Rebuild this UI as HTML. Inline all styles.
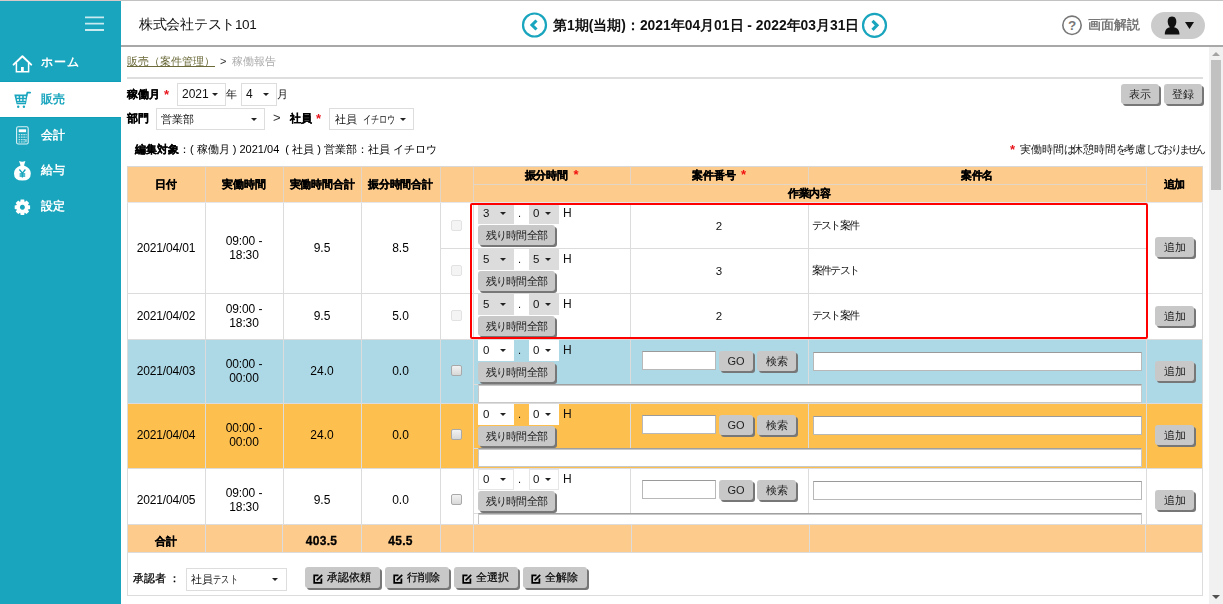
<!DOCTYPE html><html><head><meta charset="utf-8"><style>
html,body{margin:0;padding:0;width:1223px;height:604px;overflow:hidden;background:#fff;}
body{position:relative;font-family:"Liberation Sans",sans-serif;font-size:12px;color:#111;}
body div{position:absolute;box-sizing:border-box;}
.t{white-space:nowrap;will-change:transform;}
.btn{will-change:transform;background:#c8c8c8;border-radius:3px;box-shadow:2px 2px 0 #777;text-align:center;color:#222;white-space:nowrap;}
</style></head><body>
<div style="left:0px;top:0px;width:121px;height:1px;background:#d8c9c9;"></div>
<div style="left:121px;top:0px;width:1102px;height:1px;background:#c2c2c2;"></div>
<div style="left:0px;top:1px;width:121px;height:603px;background:#19a5bd;"></div>
<svg style="position:absolute;left:80px;top:10px" width="30" height="26" viewBox="80 10 30 26"><path d="M85 17.4 H104 M85 23.7 H104 M85 30 H104" stroke="#c8eaf0" stroke-width="1.8"/></svg>
<div class="t" style="left:41px;top:53px;height:18px;line-height:18px;font-size:12px;font-weight:bold;color:#fff;letter-spacing:1px;">ホーム</div>
<div style="left:0px;top:81px;width:121px;height:1px;background:#109fb8;"></div>
<div style="left:0px;top:117px;width:121px;height:1px;background:#109fb8;"></div>
<div style="left:0px;top:82px;width:121px;height:35px;background:#fff;"></div>
<div class="t" style="left:41px;top:90px;height:18px;line-height:18px;font-size:12px;font-weight:bold;color:#19a5bd;">販売</div>
<div class="t" style="left:41px;top:126px;height:18px;line-height:18px;font-size:12px;font-weight:bold;color:#fff;">会計</div>
<div class="t" style="left:41px;top:161px;height:18px;line-height:18px;font-size:12px;font-weight:bold;color:#fff;">給与</div>
<div class="t" style="left:41px;top:197px;height:18px;line-height:18px;font-size:12px;font-weight:bold;color:#fff;">設定</div>
<svg style="position:absolute;left:0;top:0" width="121" height="230" viewBox="0 0 121 230">
<path d="M13.6 64.6 L22.4 56.2 L31.2 64.6" fill="none" stroke="#fff" stroke-width="2" stroke-linecap="round" stroke-linejoin="round"/>
<path d="M16.4 63 V71.7 H28.6 V63" fill="none" stroke="#fff" stroke-width="1.5"/>
<rect x="21" y="67" width="2.8" height="5" fill="#fff"/>
<g fill="#19a5bd">
<path d="M14.3 94.6 H27.6 L25.9 104.2 H16.6 Z"/><path d="M26.4 96 L27.4 92.6 H30.2" fill="none" stroke="#19a5bd" stroke-width="1.7" stroke-linecap="round"/>
<circle cx="18.2" cy="106.8" r="1.2"/><circle cx="23.9" cy="106.8" r="1.2"/>
</g>
<g fill="#fff">
<rect x="16.6" y="96.2" width="2" height="1.6"/><rect x="20.2" y="96.2" width="2" height="1.6"/><rect x="23.8" y="96.2" width="2" height="1.6"/>
<rect x="17.0" y="99.2" width="2" height="1.6"/><rect x="20.2" y="99.2" width="2" height="1.6"/><rect x="23.6" y="99.2" width="2" height="1.6"/>
<rect x="17.4" y="102" width="7.8" height="0.9" opacity="0.6"/>
</g>
<rect x="16.6" y="126.8" width="11.6" height="17.2" rx="1.6" fill="none" stroke="#fff" stroke-opacity="0.85" stroke-width="1.1"/>
<rect x="18.7" y="129.3" width="7.4" height="2.9" fill="#fff"/>
<g fill="#fff" opacity="0.7">
<rect x="18.6" y="134" width="1.6" height="1.3"/><rect x="21" y="134" width="1.6" height="1.3"/><rect x="23.3" y="134" width="1.6" height="1.3"/><rect x="25.5" y="134" width="1.1" height="1.3"/>
<rect x="18.6" y="136.5" width="1.6" height="1.3"/><rect x="21" y="136.5" width="1.6" height="1.3"/><rect x="23.3" y="136.5" width="1.6" height="1.3"/><rect x="25.5" y="136.5" width="1.1" height="1.3"/>
<rect x="18.6" y="139" width="1.6" height="1.3"/><rect x="21" y="139" width="1.6" height="1.3"/><rect x="23.3" y="139" width="1.6" height="1.3"/><rect x="25.3" y="139" width="1.3" height="3.2"/>
<rect x="18.6" y="141.4" width="1.6" height="1.1"/><rect x="21" y="141.4" width="1.6" height="1.1"/><rect x="23.3" y="141.4" width="1.6" height="1.1"/>
</g>
<path d="M19 161 Q22.2 162.5 25.4 161 L24 165.4 Q30.8 167.8 30.8 173.5 Q30.8 180.6 22.4 180.6 Q14 180.6 14 173.5 Q14 167.8 20.6 165.4 Z" fill="#fff"/>
<path d="M19.4 169.5 L22.4 173.2 L25.4 169.5 M22.4 173 V177.5 M19.6 174 H25.2 M19.6 176 H25.2" fill="none" stroke="#19a5bd" stroke-width="1.3"/>
<path d="M27.88 205.11 L30.10 205.51 L30.10 209.09 L27.88 209.49 L27.82 209.63 L29.10 211.48 L26.58 214.00 L24.73 212.72 L24.59 212.78 L24.19 215.00 L20.61 215.00 L20.21 212.78 L20.07 212.72 L18.22 214.00 L15.70 211.48 L16.98 209.63 L16.92 209.49 L14.70 209.09 L14.70 205.51 L16.92 205.11 L16.98 204.97 L15.70 203.12 L18.22 200.60 L20.07 201.88 L20.21 201.82 L20.61 199.60 L24.19 199.60 L24.59 201.82 L24.73 201.88 L26.58 200.60 L29.10 203.12 L27.82 204.97 Z M22.4 204.8 A2.5 2.5 0 1 0 22.41 204.8 Z" fill="#fff" fill-rule="evenodd"/>
</svg>
<div style="left:121px;top:45px;width:1102px;height:2px;background:#a8a8a8;"></div>
<div class="t" style="left:139px;top:16px;height:18px;line-height:18px;font-size:13.5px;letter-spacing:-0.3px;">株式会社テスト101</div>
<svg style="position:absolute;left:521px;top:12px" width="27" height="27" viewBox="0 0 27 27"><circle cx="13.5" cy="13" r="11.5" fill="none" stroke="#19a5bd" stroke-width="2.2"/><path d="M15.5 8.5 L11 13 L15.5 17.5" fill="none" stroke="#19a5bd" stroke-width="3.1"/></svg>
<svg style="position:absolute;left:861px;top:12px" width="27" height="27" viewBox="0 0 27 27"><circle cx="13.5" cy="13.3" r="11.5" fill="none" stroke="#19a5bd" stroke-width="2.2"/><path d="M11.5 8.8 L16 13.3 L11.5 17.8" fill="none" stroke="#19a5bd" stroke-width="3.1"/></svg>
<div class="t" style="left:553px;top:16px;height:18px;line-height:18px;font-size:13.85px;font-weight:bold;">第1期(当期)：2021年04月01日 - 2022年03月31日</div>
<svg style="position:absolute;left:1061px;top:15px" width="22" height="21" viewBox="0 0 22 21"><circle cx="11" cy="10.3" r="9.2" fill="none" stroke="#777" stroke-width="1.6"/><text x="11" y="15.2" text-anchor="middle" font-size="13.5" font-weight="bold" font-family="Liberation Sans" fill="#777">?</text></svg>
<div class="t" style="left:1088px;top:16px;height:18px;line-height:18px;font-size:12.5px;font-weight:bold;color:#777;">画面解説</div>
<div style="left:1151px;top:12px;width:54px;height:27px;background:#cbcbcb;border-radius:14px;"></div>
<svg style="position:absolute;left:1163px;top:15px" width="34" height="21" viewBox="0 0 34 21"><path d="M9 1.5 C5.5 1.5 4.5 4.5 4.8 7.5 C5 10 6.3 11.5 7 12.2 C4 13 1.8 14.5 1.8 19.5 L16.5 19.5 C16.5 14.5 14 13 11 12.2 C11.8 11.5 13 10 13.3 7.5 C13.6 4.5 12.5 1.5 9 1.5 Z" fill="#111"/><path d="M22 7 L31 7 L26.5 14 Z" fill="#111"/></svg>
<div style="left:1209px;top:47px;width:14px;height:557px;background:#f1f1f1;"></div>
<div style="left:1211px;top:60px;width:10px;height:130px;background:#c1c1c1;"></div>
<div style="left:1212px;top:52px;width:0;height:0;border-left:4px solid transparent;border-right:4px solid transparent;border-bottom:4px solid #a3a3a3"></div>
<div style="left:1212px;top:595px;width:0;height:0;border-left:4px solid transparent;border-right:4px solid transparent;border-top:4px solid #505050"></div>
<div class="t" style="left:127px;top:53px;height:16px;line-height:16px;font-size:11px;"><span style="color:#6b6a3a;text-decoration:underline">販売（案件管理）</span></div>
<div class="t" style="left:220px;top:53px;height:16px;line-height:16px;font-size:11px;color:#333;">&gt;</div>
<div class="t" style="left:232px;top:53px;height:16px;line-height:16px;font-size:11px;color:#aaa;">稼働報告</div>
<div style="left:127px;top:77px;width:1076px;height:2px;background:#dedede;"></div>
<div class="t" style="left:127px;top:86px;height:16px;line-height:16px;font-size:11px;font-weight:bold;color:#000;-webkit-text-stroke:0.25px #000;">稼働月</div>
<div class="t" style="left:164px;top:87px;height:16px;line-height:16px;font-size:13px;font-weight:bold;color:#e8141b;">*</div>
<div style="left:177px;top:83px;width:49px;height:23px;background:#fff;box-sizing:border-box;border:1px solid #ddd;"></div>
<div class="t" style="left:182px;top:83px;height:23px;line-height:23px;font-size:12px;">2021</div>
<div style="left:212px;top:93px;width:0;height:0;border-left:3px solid transparent;border-right:3px solid transparent;border-top:3px solid #222"></div>
<div class="t" style="left:226px;top:86px;height:16px;line-height:16px;font-size:11px;">年</div>
<div style="left:241px;top:83px;width:36px;height:23px;background:#fff;box-sizing:border-box;border:1px solid #ddd;"></div>
<div class="t" style="left:246px;top:83px;height:23px;line-height:23px;font-size:12px;">4</div>
<div style="left:263px;top:93px;width:0;height:0;border-left:3px solid transparent;border-right:3px solid transparent;border-top:3px solid #222"></div>
<div class="t" style="left:277px;top:86px;height:16px;line-height:16px;font-size:11px;">月</div>
<div class="btn" style="left:1121px;top:84px;width:38px;height:20px;line-height:20px;font-size:11px;">表示</div>
<div class="btn" style="left:1164px;top:84px;width:38px;height:20px;line-height:20px;font-size:11px;">登録</div>
<div class="t" style="left:127px;top:110px;height:16px;line-height:16px;font-size:11px;font-weight:bold;color:#000;-webkit-text-stroke:0.25px #000;">部門</div>
<div style="left:156px;top:108px;width:109px;height:22px;background:#fff;box-sizing:border-box;border:1px solid #ddd;"></div>
<div class="t" style="left:161px;top:108px;height:22px;line-height:22px;font-size:11px;">営業部</div>
<div style="left:251px;top:118px;width:0;height:0;border-left:3px solid transparent;border-right:3px solid transparent;border-top:3px solid #222"></div>
<div class="t" style="left:273px;top:110px;height:16px;line-height:16px;font-size:13px;color:#333;">&gt;</div>
<div class="t" style="left:290px;top:110px;height:16px;line-height:16px;font-size:11px;font-weight:bold;color:#000;-webkit-text-stroke:0.25px #000;">社員</div>
<div class="t" style="left:316px;top:111px;height:16px;line-height:16px;font-size:13px;font-weight:bold;color:#e8141b;">*</div>
<div style="left:329px;top:108px;width:85px;height:22px;background:#fff;border:1px solid #ddd;"></div>
<div class="t" style="left:335px;top:108px;height:22px;line-height:22px;font-size:11px;">社員</div>
<div class="t" style="left:363px;top:108px;height:22px;line-height:22px;font-size:11px;"><span style="display:inline-block;transform:scaleX(0.74);transform-origin:0 50%">イチロウ</span></div>
<div style="left:400px;top:118px;width:0;height:0;border-left:3px solid transparent;border-right:3px solid transparent;border-top:3px solid #222"></div>
<div class="t" style="left:135px;top:141px;height:16px;line-height:16px;font-size:11px;color:#000;"><b style="-webkit-text-stroke:0.2px #000;color:#000">編集対象</b>：( 稼働月 ) 2021/04&nbsp; ( 社員 ) 営業部：社員 イチロウ</div>
<div class="t" style="left:1010px;top:142px;height:16px;line-height:16px;font-size:13px;font-weight:bold;color:#e8141b;">*</div>
<div class="t" style="left:1020px;top:141px;height:16px;line-height:16px;font-size:11px;">実働時間<span style="letter-spacing:-2.9px">は</span>休憩時間<span style="letter-spacing:-2.9px">を</span>考慮<span style="letter-spacing:-2.9px">しておりません</span></div>
<div style="left:127px;top:166px;width:1076px;height:37px;background:#fdcb8c;border:1px solid #e3d6c6;border-bottom:none;border-top-color:#d8d8d8;"></div>
<div style="left:205px;top:166px;width:1px;height:36px;background:#e3d6c6;"></div>
<div style="left:283px;top:166px;width:1px;height:36px;background:#e3d6c6;"></div>
<div style="left:361px;top:166px;width:1px;height:36px;background:#e3d6c6;"></div>
<div style="left:440px;top:166px;width:1px;height:36px;background:#e3d6c6;"></div>
<div style="left:473px;top:166px;width:1px;height:36px;background:#e3d6c6;"></div>
<div style="left:630px;top:166px;width:1px;height:18px;background:#e3d6c6;"></div>
<div style="left:808px;top:166px;width:1px;height:18px;background:#e3d6c6;"></div>
<div style="left:1146px;top:166px;width:1px;height:36px;background:#e3d6c6;"></div>
<div style="left:473px;top:184px;width:673px;height:1px;background:#e3d6c6;"></div>
<div style="left:127px;top:202px;width:1076px;height:1px;background:#e4e6ec;"></div>
<div class="t" style="left:127px;top:177px;width:78px;height:14px;line-height:14px;text-align:center;font-size:11px;font-weight:bold;color:#000;-webkit-text-stroke:0.25px #000;letter-spacing:-0.2px;">日付</div>
<div class="t" style="left:205px;top:177px;width:78px;height:14px;line-height:14px;text-align:center;font-size:11px;font-weight:bold;color:#000;-webkit-text-stroke:0.25px #000;letter-spacing:-0.2px;">実働時間</div>
<div class="t" style="left:283px;top:177px;width:78px;height:14px;line-height:14px;text-align:center;font-size:11px;font-weight:bold;color:#000;-webkit-text-stroke:0.25px #000;letter-spacing:-0.2px;">実働時間合計</div>
<div class="t" style="left:361px;top:177px;width:79px;height:14px;line-height:14px;text-align:center;font-size:11px;font-weight:bold;color:#000;-webkit-text-stroke:0.25px #000;letter-spacing:-0.2px;">振分時間合計</div>
<div class="t" style="left:1146px;top:177px;width:57px;height:14px;line-height:14px;text-align:center;font-size:11px;font-weight:bold;color:#000;-webkit-text-stroke:0.25px #000;letter-spacing:-0.2px;">追加</div>
<div class="t" style="left:473px;top:168px;width:157px;height:14px;line-height:14px;text-align:center;font-size:11px;font-weight:bold;color:#000;-webkit-text-stroke:0.25px #000;letter-spacing:-0.2px;">振分時間&nbsp; <span style="color:#f01010;-webkit-text-stroke:0;font-size:13px">*</span></div>
<div class="t" style="left:630px;top:168px;width:178px;height:14px;line-height:14px;text-align:center;font-size:11px;font-weight:bold;color:#000;-webkit-text-stroke:0.25px #000;letter-spacing:-0.2px;">案件番号&nbsp; <span style="color:#f01010;-webkit-text-stroke:0;font-size:13px">*</span></div>
<div class="t" style="left:808px;top:168px;width:338px;height:14px;line-height:14px;text-align:center;font-size:11px;font-weight:bold;color:#000;-webkit-text-stroke:0.25px #000;letter-spacing:-0.2px;">案件名</div>
<div class="t" style="left:473px;top:186px;width:673px;height:14px;line-height:14px;text-align:center;font-size:11px;font-weight:bold;color:#000;-webkit-text-stroke:0.25px #000;letter-spacing:-0.2px;">作業内容</div>
<div style="left:127px;top:203px;width:1076px;height:90px;background:#fff;"></div>
<div style="left:127px;top:293px;width:1076px;height:46px;background:#fff;"></div>
<div style="left:127px;top:339px;width:1076px;height:64px;background:#add8e6;"></div>
<div style="left:127px;top:403px;width:1076px;height:65px;background:#fdbf4e;"></div>
<div style="left:127px;top:468px;width:1076px;height:56px;background:#fff;"></div>
<div class="t" style="left:127px;top:241px;width:78px;height:14px;line-height:14px;text-align:center;font-size:12px;letter-spacing:-0.15px;color:#000;">2021/04/01</div>
<div class="t" style="left:205px;top:234px;width:78px;font-size:12px;letter-spacing:-0.1px;line-height:14px;text-align:center;color:#000;">09:00 -<br>18:30</div>
<div class="t" style="left:283px;top:241px;width:78px;height:14px;line-height:14px;text-align:center;font-size:12px;color:#000;">9.5</div>
<div class="t" style="left:361px;top:241px;width:79px;height:14px;line-height:14px;text-align:center;font-size:12px;color:#000;">8.5</div>
<div style="left:451px;top:220px;width:11px;height:11px;background:#f4f4f4;border:1px solid #e2e2e2;border-radius:2px;"></div>
<div style="left:478px;top:203px;width:36px;height:21px;background:#dcdcdc;"></div>
<div class="t" style="left:483px;top:204px;height:19px;line-height:19px;font-size:11.5px;">3</div>
<div style="left:500px;top:212px;width:0;height:0;border-left:3px solid transparent;border-right:3px solid transparent;border-top:3px solid #222"></div>
<div style="left:514px;top:203px;width:15px;height:21px;background:#fff;"></div>
<div class="t" style="left:518px;top:204px;height:19px;line-height:19px;font-size:11px;">.</div>
<div style="left:529px;top:203px;width:30px;height:21px;background:#dcdcdc;"></div>
<div class="t" style="left:533px;top:204px;height:19px;line-height:19px;font-size:11.5px;">0</div>
<div style="left:545px;top:212px;width:0;height:0;border-left:3px solid transparent;border-right:3px solid transparent;border-top:3px solid #222"></div>
<div class="t" style="left:563px;top:204px;height:19px;line-height:19px;font-size:12px;">H</div>
<div class="btn" style="left:478px;top:225px;width:77px;height:20px;line-height:20px;font-size:11px;letter-spacing:-0.9px;">残り時間全部</div>
<div class="t" style="left:630px;top:219px;width:178px;height:14px;line-height:14px;text-align:center;font-size:11.5px;">2</div>
<div class="t" style="left:812px;top:218px;height:14px;line-height:14px;font-size:11px;letter-spacing:-1.8px;">テスト案件</div>
<div style="left:451px;top:265px;width:11px;height:11px;background:#f4f4f4;border:1px solid #e2e2e2;border-radius:2px;"></div>
<div style="left:478px;top:249px;width:36px;height:21px;background:#dcdcdc;"></div>
<div class="t" style="left:483px;top:250px;height:19px;line-height:19px;font-size:11.5px;">5</div>
<div style="left:500px;top:258px;width:0;height:0;border-left:3px solid transparent;border-right:3px solid transparent;border-top:3px solid #222"></div>
<div style="left:514px;top:249px;width:15px;height:21px;background:#fff;"></div>
<div class="t" style="left:518px;top:250px;height:19px;line-height:19px;font-size:11px;">.</div>
<div style="left:529px;top:249px;width:30px;height:21px;background:#dcdcdc;"></div>
<div class="t" style="left:533px;top:250px;height:19px;line-height:19px;font-size:11.5px;">5</div>
<div style="left:545px;top:258px;width:0;height:0;border-left:3px solid transparent;border-right:3px solid transparent;border-top:3px solid #222"></div>
<div class="t" style="left:563px;top:250px;height:19px;line-height:19px;font-size:12px;">H</div>
<div class="btn" style="left:478px;top:271px;width:77px;height:20px;line-height:20px;font-size:11px;letter-spacing:-0.9px;">残り時間全部</div>
<div class="t" style="left:630px;top:264px;width:178px;height:14px;line-height:14px;text-align:center;font-size:11.5px;">3</div>
<div class="t" style="left:812px;top:263px;height:14px;line-height:14px;font-size:11px;letter-spacing:-1.8px;">案件テスト</div>
<div style="left:440px;top:248px;width:706px;height:1px;background:#dcdcdc;"></div>
<div class="btn" style="left:1155px;top:237px;width:39px;height:20px;line-height:20px;font-size:11px;">追加</div>
<div style="left:205px;top:203px;width:1px;height:90px;background:#dcdcdc;"></div>
<div style="left:283px;top:203px;width:1px;height:90px;background:#dcdcdc;"></div>
<div style="left:361px;top:203px;width:1px;height:90px;background:#dcdcdc;"></div>
<div style="left:440px;top:203px;width:1px;height:90px;background:#dcdcdc;"></div>
<div style="left:473px;top:203px;width:1px;height:90px;background:#dcdcdc;"></div>
<div style="left:630px;top:203px;width:1px;height:90px;background:#dcdcdc;"></div>
<div style="left:808px;top:203px;width:1px;height:90px;background:#dcdcdc;"></div>
<div style="left:1146px;top:203px;width:1px;height:90px;background:#dcdcdc;"></div>
<div style="left:127px;top:203px;width:1px;height:90px;background:#dcdcdc;"></div>
<div style="left:1202px;top:203px;width:1px;height:90px;background:#dcdcdc;"></div>
<div style="left:127px;top:293px;width:1076px;height:1px;background:#dcdcdc;"></div>
<div class="t" style="left:127px;top:309px;width:78px;height:14px;line-height:14px;text-align:center;font-size:12px;letter-spacing:-0.15px;color:#000;">2021/04/02</div>
<div class="t" style="left:205px;top:302px;width:78px;font-size:12px;letter-spacing:-0.1px;line-height:14px;text-align:center;color:#000;">09:00 -<br>18:30</div>
<div class="t" style="left:283px;top:309px;width:78px;height:14px;line-height:14px;text-align:center;font-size:12px;color:#000;">9.5</div>
<div class="t" style="left:361px;top:309px;width:79px;height:14px;line-height:14px;text-align:center;font-size:12px;color:#000;">5.0</div>
<div style="left:451px;top:310px;width:11px;height:11px;background:#f4f4f4;border:1px solid #e2e2e2;border-radius:2px;"></div>
<div style="left:478px;top:294px;width:36px;height:21px;background:#dcdcdc;"></div>
<div class="t" style="left:483px;top:295px;height:19px;line-height:19px;font-size:11.5px;">5</div>
<div style="left:500px;top:303px;width:0;height:0;border-left:3px solid transparent;border-right:3px solid transparent;border-top:3px solid #222"></div>
<div style="left:514px;top:294px;width:15px;height:21px;background:#fff;"></div>
<div class="t" style="left:518px;top:295px;height:19px;line-height:19px;font-size:11px;">.</div>
<div style="left:529px;top:294px;width:30px;height:21px;background:#dcdcdc;"></div>
<div class="t" style="left:533px;top:295px;height:19px;line-height:19px;font-size:11.5px;">0</div>
<div style="left:545px;top:303px;width:0;height:0;border-left:3px solid transparent;border-right:3px solid transparent;border-top:3px solid #222"></div>
<div class="t" style="left:563px;top:295px;height:19px;line-height:19px;font-size:12px;">H</div>
<div class="btn" style="left:478px;top:316px;width:77px;height:20px;line-height:20px;font-size:11px;letter-spacing:-0.9px;">残り時間全部</div>
<div class="t" style="left:630px;top:309px;width:178px;height:14px;line-height:14px;text-align:center;font-size:11.5px;">2</div>
<div class="t" style="left:812px;top:308px;height:14px;line-height:14px;font-size:11px;letter-spacing:-1.8px;">テスト案件</div>
<div class="btn" style="left:1155px;top:306px;width:39px;height:20px;line-height:20px;font-size:11px;">追加</div>
<div style="left:205px;top:293px;width:1px;height:46px;background:#dcdcdc;"></div>
<div style="left:283px;top:293px;width:1px;height:46px;background:#dcdcdc;"></div>
<div style="left:361px;top:293px;width:1px;height:46px;background:#dcdcdc;"></div>
<div style="left:440px;top:293px;width:1px;height:46px;background:#dcdcdc;"></div>
<div style="left:473px;top:293px;width:1px;height:46px;background:#dcdcdc;"></div>
<div style="left:630px;top:293px;width:1px;height:46px;background:#dcdcdc;"></div>
<div style="left:808px;top:293px;width:1px;height:46px;background:#dcdcdc;"></div>
<div style="left:1146px;top:293px;width:1px;height:46px;background:#dcdcdc;"></div>
<div style="left:127px;top:293px;width:1px;height:46px;background:#dcdcdc;"></div>
<div style="left:1202px;top:293px;width:1px;height:46px;background:#dcdcdc;"></div>
<div style="left:127px;top:339px;width:1076px;height:1px;background:#dcdcdc;"></div>
<div class="t" style="left:127px;top:364px;width:78px;height:14px;line-height:14px;text-align:center;font-size:12px;letter-spacing:-0.15px;color:#000;">2021/04/03</div>
<div class="t" style="left:205px;top:357px;width:78px;font-size:12px;letter-spacing:-0.1px;line-height:14px;text-align:center;color:#000;">00:00 -<br>00:00</div>
<div class="t" style="left:283px;top:364px;width:78px;height:14px;line-height:14px;text-align:center;font-size:12px;color:#000;">24.0</div>
<div class="t" style="left:361px;top:364px;width:79px;height:14px;line-height:14px;text-align:center;font-size:12px;color:#000;">0.0</div>
<div style="left:451px;top:365px;width:11px;height:11px;background:linear-gradient(#f2f2f2,#d8d8d8);border:1px solid #a9a9a9;border-radius:2px;"></div>
<div style="left:478px;top:340px;width:36px;height:21px;background:#fff;"></div>
<div class="t" style="left:483px;top:341px;height:19px;line-height:19px;font-size:11.5px;">0</div>
<div style="left:500px;top:349px;width:0;height:0;border-left:3px solid transparent;border-right:3px solid transparent;border-top:3px solid #222"></div>
<div class="t" style="left:518px;top:341px;height:19px;line-height:19px;font-size:11px;">.</div>
<div style="left:529px;top:340px;width:30px;height:21px;background:#fff;"></div>
<div class="t" style="left:533px;top:341px;height:19px;line-height:19px;font-size:11.5px;">0</div>
<div style="left:545px;top:349px;width:0;height:0;border-left:3px solid transparent;border-right:3px solid transparent;border-top:3px solid #222"></div>
<div class="t" style="left:563px;top:341px;height:19px;line-height:19px;font-size:12px;">H</div>
<div class="btn" style="left:478px;top:362px;width:77px;height:20px;line-height:20px;font-size:11px;letter-spacing:-0.9px;">残り時間全部</div>
<div style="left:642px;top:351px;width:74px;height:19px;background:#fff;border:1px solid #b8b8b8;border-top-color:#9a9a9a;"></div>
<div class="btn" style="left:719px;top:351px;width:34px;height:20px;line-height:20px;font-size:11px;">GO</div>
<div class="btn" style="left:757px;top:351px;width:39px;height:20px;line-height:20px;font-size:11px;">検索</div>
<div style="left:813px;top:352px;width:329px;height:19px;background:#fff;border:1px solid #b8b8b8;border-top-color:#9a9a9a;"></div>
<div style="left:473px;top:384px;width:5px;height:1px;background:#dcdcdc;"></div>
<div style="left:478px;top:384px;width:664px;height:19px;background:#fff;border:1px solid #c8c8c8;border-top:1px solid #a0a0a0;box-shadow:inset 0 1px 0 #c8c8c8;"></div>
<div class="btn" style="left:1155px;top:361px;width:39px;height:20px;line-height:20px;font-size:11px;">追加</div>
<div style="left:205px;top:339px;width:1px;height:64px;background:#dcdcdc;"></div>
<div style="left:283px;top:339px;width:1px;height:64px;background:#dcdcdc;"></div>
<div style="left:361px;top:339px;width:1px;height:64px;background:#dcdcdc;"></div>
<div style="left:440px;top:339px;width:1px;height:64px;background:#dcdcdc;"></div>
<div style="left:473px;top:339px;width:1px;height:64px;background:#dcdcdc;"></div>
<div style="left:630px;top:339px;width:1px;height:45px;background:#dcdcdc;"></div>
<div style="left:808px;top:339px;width:1px;height:45px;background:#dcdcdc;"></div>
<div style="left:1146px;top:339px;width:1px;height:64px;background:#dcdcdc;"></div>
<div style="left:127px;top:339px;width:1px;height:64px;background:#dcdcdc;"></div>
<div style="left:1202px;top:339px;width:1px;height:64px;background:#dcdcdc;"></div>
<div style="left:127px;top:403px;width:1076px;height:1px;background:#dcdcdc;"></div>
<div class="t" style="left:127px;top:428px;width:78px;height:14px;line-height:14px;text-align:center;font-size:12px;letter-spacing:-0.15px;color:#000;">2021/04/04</div>
<div class="t" style="left:205px;top:421px;width:78px;font-size:12px;letter-spacing:-0.1px;line-height:14px;text-align:center;color:#000;">00:00 -<br>00:00</div>
<div class="t" style="left:283px;top:428px;width:78px;height:14px;line-height:14px;text-align:center;font-size:12px;color:#000;">24.0</div>
<div class="t" style="left:361px;top:428px;width:79px;height:14px;line-height:14px;text-align:center;font-size:12px;color:#000;">0.0</div>
<div style="left:451px;top:429px;width:11px;height:11px;background:linear-gradient(#f2f2f2,#d8d8d8);border:1px solid #a9a9a9;border-radius:2px;"></div>
<div style="left:478px;top:404px;width:36px;height:21px;background:#fff;"></div>
<div class="t" style="left:483px;top:405px;height:19px;line-height:19px;font-size:11.5px;">0</div>
<div style="left:500px;top:413px;width:0;height:0;border-left:3px solid transparent;border-right:3px solid transparent;border-top:3px solid #222"></div>
<div class="t" style="left:518px;top:405px;height:19px;line-height:19px;font-size:11px;">.</div>
<div style="left:529px;top:404px;width:30px;height:21px;background:#fff;"></div>
<div class="t" style="left:533px;top:405px;height:19px;line-height:19px;font-size:11.5px;">0</div>
<div style="left:545px;top:413px;width:0;height:0;border-left:3px solid transparent;border-right:3px solid transparent;border-top:3px solid #222"></div>
<div class="t" style="left:563px;top:405px;height:19px;line-height:19px;font-size:12px;">H</div>
<div class="btn" style="left:478px;top:426px;width:77px;height:20px;line-height:20px;font-size:11px;letter-spacing:-0.9px;">残り時間全部</div>
<div style="left:642px;top:415px;width:74px;height:19px;background:#fff;border:1px solid #b8b8b8;border-top-color:#9a9a9a;"></div>
<div class="btn" style="left:719px;top:415px;width:34px;height:20px;line-height:20px;font-size:11px;">GO</div>
<div class="btn" style="left:757px;top:415px;width:39px;height:20px;line-height:20px;font-size:11px;">検索</div>
<div style="left:813px;top:416px;width:329px;height:19px;background:#fff;border:1px solid #b8b8b8;border-top-color:#9a9a9a;"></div>
<div style="left:473px;top:448px;width:5px;height:1px;background:#dcdcdc;"></div>
<div style="left:478px;top:448px;width:664px;height:19px;background:#fff;border:1px solid #c8c8c8;border-top:1px solid #a0a0a0;box-shadow:inset 0 1px 0 #c8c8c8;"></div>
<div class="btn" style="left:1155px;top:425px;width:39px;height:20px;line-height:20px;font-size:11px;">追加</div>
<div style="left:205px;top:403px;width:1px;height:65px;background:#dcdcdc;"></div>
<div style="left:283px;top:403px;width:1px;height:65px;background:#dcdcdc;"></div>
<div style="left:361px;top:403px;width:1px;height:65px;background:#dcdcdc;"></div>
<div style="left:440px;top:403px;width:1px;height:65px;background:#dcdcdc;"></div>
<div style="left:473px;top:403px;width:1px;height:65px;background:#dcdcdc;"></div>
<div style="left:630px;top:403px;width:1px;height:45px;background:#dcdcdc;"></div>
<div style="left:808px;top:403px;width:1px;height:45px;background:#dcdcdc;"></div>
<div style="left:1146px;top:403px;width:1px;height:65px;background:#dcdcdc;"></div>
<div style="left:127px;top:403px;width:1px;height:65px;background:#dcdcdc;"></div>
<div style="left:1202px;top:403px;width:1px;height:65px;background:#dcdcdc;"></div>
<div style="left:127px;top:468px;width:1076px;height:1px;background:#dcdcdc;"></div>
<div class="t" style="left:127px;top:493px;width:78px;height:14px;line-height:14px;text-align:center;font-size:12px;letter-spacing:-0.15px;color:#000;">2021/04/05</div>
<div class="t" style="left:205px;top:486px;width:78px;font-size:12px;letter-spacing:-0.1px;line-height:14px;text-align:center;color:#000;">09:00 -<br>18:30</div>
<div class="t" style="left:283px;top:493px;width:78px;height:14px;line-height:14px;text-align:center;font-size:12px;color:#000;">9.5</div>
<div class="t" style="left:361px;top:493px;width:79px;height:14px;line-height:14px;text-align:center;font-size:12px;color:#000;">0.0</div>
<div style="left:451px;top:494px;width:11px;height:11px;background:linear-gradient(#f2f2f2,#d8d8d8);border:1px solid #a9a9a9;border-radius:2px;"></div>
<div style="left:478px;top:469px;width:36px;height:21px;background:#fff;border:1px solid #e6e6e6;"></div>
<div class="t" style="left:483px;top:470px;height:19px;line-height:19px;font-size:11.5px;">0</div>
<div style="left:500px;top:478px;width:0;height:0;border-left:3px solid transparent;border-right:3px solid transparent;border-top:3px solid #222"></div>
<div class="t" style="left:518px;top:470px;height:19px;line-height:19px;font-size:11px;">.</div>
<div style="left:529px;top:469px;width:30px;height:21px;background:#fff;border:1px solid #e6e6e6;"></div>
<div class="t" style="left:533px;top:470px;height:19px;line-height:19px;font-size:11.5px;">0</div>
<div style="left:545px;top:478px;width:0;height:0;border-left:3px solid transparent;border-right:3px solid transparent;border-top:3px solid #222"></div>
<div class="t" style="left:563px;top:470px;height:19px;line-height:19px;font-size:12px;">H</div>
<div class="btn" style="left:478px;top:491px;width:77px;height:20px;line-height:20px;font-size:11px;letter-spacing:-0.9px;">残り時間全部</div>
<div style="left:642px;top:480px;width:74px;height:19px;background:#fff;border:1px solid #b8b8b8;border-top-color:#9a9a9a;"></div>
<div class="btn" style="left:719px;top:480px;width:34px;height:20px;line-height:20px;font-size:11px;">GO</div>
<div class="btn" style="left:757px;top:480px;width:39px;height:20px;line-height:20px;font-size:11px;">検索</div>
<div style="left:813px;top:481px;width:329px;height:19px;background:#fff;border:1px solid #b8b8b8;border-top-color:#9a9a9a;"></div>
<div style="left:473px;top:513px;width:5px;height:1px;background:#dcdcdc;"></div>
<div style="left:478px;top:513px;width:664px;height:19px;background:#fff;border:1px solid #c8c8c8;border-top:1px solid #a0a0a0;box-shadow:inset 0 1px 0 #c8c8c8;"></div>
<div class="btn" style="left:1155px;top:490px;width:39px;height:20px;line-height:20px;font-size:11px;">追加</div>
<div style="left:205px;top:468px;width:1px;height:56px;background:#dcdcdc;"></div>
<div style="left:283px;top:468px;width:1px;height:56px;background:#dcdcdc;"></div>
<div style="left:361px;top:468px;width:1px;height:56px;background:#dcdcdc;"></div>
<div style="left:440px;top:468px;width:1px;height:56px;background:#dcdcdc;"></div>
<div style="left:473px;top:468px;width:1px;height:56px;background:#dcdcdc;"></div>
<div style="left:630px;top:468px;width:1px;height:45px;background:#dcdcdc;"></div>
<div style="left:808px;top:468px;width:1px;height:45px;background:#dcdcdc;"></div>
<div style="left:1146px;top:468px;width:1px;height:56px;background:#dcdcdc;"></div>
<div style="left:127px;top:468px;width:1px;height:56px;background:#dcdcdc;"></div>
<div style="left:1202px;top:468px;width:1px;height:56px;background:#dcdcdc;"></div>
<div style="left:470px;top:203px;width:678px;height:136px;border:2px solid #ff0000;border-radius:2px;"></div>
<div style="left:127px;top:524px;width:1076px;height:29px;background:#fdcb8c;border:1px solid #dcdcdc;"></div>
<div style="left:205px;top:524px;width:1px;height:29px;background:#dcdcdc;"></div>
<div style="left:282px;top:524px;width:1px;height:29px;background:#dcdcdc;"></div>
<div style="left:361px;top:524px;width:1px;height:29px;background:#dcdcdc;"></div>
<div style="left:440px;top:524px;width:1px;height:29px;background:#dcdcdc;"></div>
<div style="left:473px;top:524px;width:1px;height:29px;background:#dcdcdc;"></div>
<div style="left:631px;top:524px;width:1px;height:29px;background:#dcdcdc;"></div>
<div style="left:809px;top:524px;width:1px;height:29px;background:#dcdcdc;"></div>
<div style="left:1145px;top:524px;width:1px;height:29px;background:#dcdcdc;"></div>
<div class="t" style="left:127px;top:534px;width:78px;height:14px;line-height:14px;text-align:center;font-size:11px;font-weight:bold;color:#000;-webkit-text-stroke:0.25px #000;">合計</div>
<div class="t" style="left:282px;top:534px;width:79px;height:14px;line-height:14px;text-align:center;font-size:12px;font-weight:bold;color:#000;-webkit-text-stroke:0.3px #000;letter-spacing:0.3px;">403.5</div>
<div class="t" style="left:361px;top:534px;width:79px;height:14px;line-height:14px;text-align:center;font-size:12px;font-weight:bold;color:#000;-webkit-text-stroke:0.3px #000;letter-spacing:0.3px;">45.5</div>
<div style="left:127px;top:553px;width:1076px;height:43px;border:1px solid #dcdcdc;border-top:none;"></div>
<div class="t" style="left:133px;top:571px;height:14px;line-height:14px;font-size:11px;color:#000;-webkit-text-stroke:0.25px #000;">承認者 ：</div>
<div style="left:186px;top:568px;width:101px;height:23px;background:#fff;box-sizing:border-box;border:1px solid #ddd;"></div>
<div class="t" style="left:191px;top:568px;height:23px;line-height:23px;font-size:11px;">社員<span style="display:inline-block;transform:scaleX(0.75);transform-origin:0 50%">テスト</span></div>
<div style="left:272px;top:578px;width:0;height:0;border-left:3px solid transparent;border-right:3px solid transparent;border-top:3px solid #222"></div>
<div class="btn" style="left:305px;top:567px;width:75px;height:21px;line-height:21px;font-size:12px;"></div>
<svg style="position:absolute;left:313px;top:574px" width="10" height="10" viewBox="0 0 10 10"><path d="M5.5 1.4 H1.2 V8.8 H8.4 V4.6" stroke="#000" stroke-width="1.7" fill="none"/><path d="M3.6 6.3 L9.2 0.8" stroke="#000" stroke-width="1.7"/></svg>
<div class="t" style="left:327px;top:567px;height:21px;line-height:21px;font-size:11px;color:#000;-webkit-text-stroke:0.2px #000;">承認依頼</div>
<div class="btn" style="left:385px;top:567px;width:64px;height:21px;line-height:21px;font-size:12px;"></div>
<svg style="position:absolute;left:393px;top:574px" width="10" height="10" viewBox="0 0 10 10"><path d="M5.5 1.4 H1.2 V8.8 H8.4 V4.6" stroke="#000" stroke-width="1.7" fill="none"/><path d="M3.6 6.3 L9.2 0.8" stroke="#000" stroke-width="1.7"/></svg>
<div class="t" style="left:407px;top:567px;height:21px;line-height:21px;font-size:11px;color:#000;-webkit-text-stroke:0.2px #000;">行削除</div>
<div class="btn" style="left:454px;top:567px;width:64px;height:21px;line-height:21px;font-size:12px;"></div>
<svg style="position:absolute;left:462px;top:574px" width="10" height="10" viewBox="0 0 10 10"><path d="M5.5 1.4 H1.2 V8.8 H8.4 V4.6" stroke="#000" stroke-width="1.7" fill="none"/><path d="M3.6 6.3 L9.2 0.8" stroke="#000" stroke-width="1.7"/></svg>
<div class="t" style="left:476px;top:567px;height:21px;line-height:21px;font-size:11px;color:#000;-webkit-text-stroke:0.2px #000;">全選択</div>
<div class="btn" style="left:523px;top:567px;width:64px;height:21px;line-height:21px;font-size:12px;"></div>
<svg style="position:absolute;left:531px;top:574px" width="10" height="10" viewBox="0 0 10 10"><path d="M5.5 1.4 H1.2 V8.8 H8.4 V4.6" stroke="#000" stroke-width="1.7" fill="none"/><path d="M3.6 6.3 L9.2 0.8" stroke="#000" stroke-width="1.7"/></svg>
<div class="t" style="left:545px;top:567px;height:21px;line-height:21px;font-size:11px;color:#000;-webkit-text-stroke:0.2px #000;">全解除</div>
</body></html>
